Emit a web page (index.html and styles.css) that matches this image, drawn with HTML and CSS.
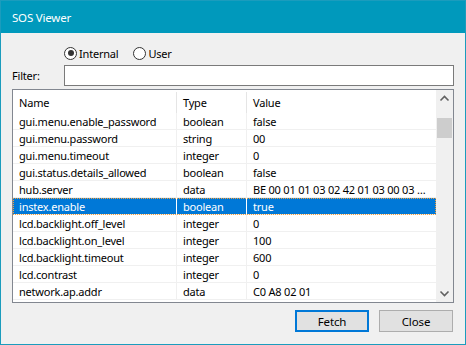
FILE: index.html
```html
<!DOCTYPE html>
<html lang="en">
<head>
    <meta charset="UTF-8">
    <title>SOS Viewer</title>
    <link rel="stylesheet" href="styles.css">
</head>
<body>
    <div class="window">
        <div class="titlebar">SOS Viewer</div>
        <div class="content">
            <div class="radios">
                <label class="radio"><span class="dot checked"></span>Internal</label>
                <label class="radio"><span class="dot"></span>User</label>
            </div>
            <div class="filter">
                <span class="filter-label">Filter:</span>
                <div class="filter-input"></div>
            </div>
            <div class="list">
                <div class="rows">
                    <div class="row head">
                        <div class="cell name">Name</div>
                        <div class="cell type">Type</div>
                        <div class="cell value">Value</div>
                    </div>
                    <div class="row"><div class="cell name">gui.menu.enable_password</div><div class="cell type">boolean</div><div class="cell value">false</div></div>
                    <div class="row"><div class="cell name">gui.menu.password</div><div class="cell type">string</div><div class="cell value">00</div></div>
                    <div class="row"><div class="cell name">gui.menu.timeout</div><div class="cell type">integer</div><div class="cell value">0</div></div>
                    <div class="row"><div class="cell name">gui.status.details_allowed</div><div class="cell type">boolean</div><div class="cell value">false</div></div>
                    <div class="row"><div class="cell name">hub.server</div><div class="cell type">data</div><div class="cell value">BE 00 01 01 03 02 42 01 03 00 03 …</div></div>
                    <div class="row selected"><div class="cell name">instex.enable</div><div class="cell type">boolean</div><div class="cell value">true</div></div>
                    <div class="row"><div class="cell name">lcd.backlight.off_level</div><div class="cell type">integer</div><div class="cell value">0</div></div>
                    <div class="row"><div class="cell name">lcd.backlight.on_level</div><div class="cell type">integer</div><div class="cell value">100</div></div>
                    <div class="row"><div class="cell name">lcd.backlight.timeout</div><div class="cell type">integer</div><div class="cell value">600</div></div>
                    <div class="row"><div class="cell name">lcd.contrast</div><div class="cell type">integer</div><div class="cell value">0</div></div>
                    <div class="row"><div class="cell name">network.ap.addr</div><div class="cell type">data</div><div class="cell value">C0 A8 02 01</div></div>
                </div>
                <div class="scrollbar">
                    <svg class="arrow" width="17" height="17" viewBox="0 0 17 17"><path d="M4.5 10.5 L8.5 6.5 L12.5 10.5" fill="none" stroke="#606060" stroke-width="1.6"/></svg>
                    <div class="track"><div class="thumb"></div></div>
                    <svg class="arrow" width="17" height="17" viewBox="0 0 17 17"><path d="M4.5 6.5 L8.5 10.5 L12.5 6.5" fill="none" stroke="#606060" stroke-width="1.6"/></svg>
                </div>
            </div>
            <div class="buttons">
                <button class="btn default">Fetch</button>
                <button class="btn">Close</button>
            </div>
        </div>
    </div>
</body>
</html>
```
FILE: styles.css
```css
body {
    margin: 0;
    font-family: "Noto Sans", "Liberation Sans", sans-serif;
    font-size: 11px;
    letter-spacing: -0.2px;
    color: #000;
}
.window {
    width: 466px;
    height: 345px;
    box-sizing: border-box;
    border: 1px solid #1b9cbd;
    background: #f0f0f0;
}
.titlebar {
    height: 32px;
    background: #0099bc;
    color: #fff;
    padding-left: 11px;
    display: flex;
    align-items: center;
    font-size: 11.5px;
}
.content {
    padding: 13px 11px 0 11px;
}
.radios {
    display: flex;
    align-items: center;
    height: 14px;
    margin-left: 52px;
}
.radio {
    display: flex;
    align-items: center;
    margin-right: 15px;
}
.dot {
    width: 11px;
    height: 11px;
    border: 1px solid #333;
    border-radius: 50%;
    background: #fff;
    margin-right: 2px;
    position: relative;
}
.dot.checked::after {
    content: "";
    position: absolute;
    left: 2.5px;
    top: 2.5px;
    width: 6px;
    height: 6px;
    border-radius: 50%;
    background: #333;
}
.filter {
    display: flex;
    align-items: center;
    margin-top: 5px;
}
.filter-label {
    width: 52px;
}
.filter-input {
    flex: 1;
    height: 19px;
    border: 1px solid #7a7a7a;
    background: #fff;
}
.list {
    margin-top: 3px;
    height: 212px;
    border: 1px solid #828790;
    background: #fff;
    display: flex;
}
.rows {
    flex: 1;
    overflow: hidden;
}
.row {
    display: flex;
    height: 17px;
    line-height: 15px;
    padding-top: 1px;
    border-bottom: 1px solid #f0f0f0;
    box-sizing: border-box;
}
.row.head {
    height: 23px;
    line-height: 22px;
    padding-top: 2px;
    border-bottom: none;
}
.cell {
    padding-left: 6px;
    box-sizing: border-box;
    white-space: nowrap;
    overflow: hidden;
}
.name {
    width: 163px;
}
.type {
    width: 70px;
    border-left: 1px solid #f0f0f0;
}
.value {
    flex: 1;
    border-left: 1px solid #f0f0f0;
}
.row .type,
.row .value {
    margin-top: -1px;
    padding-top: 1px;
}
.head .type,
.head .value {
    border-left-color: #e5e5e5;
    margin-top: 0;
    padding-top: 0;
}
.row.selected {
    background: #0078d7;
    color: #fff;
    outline: 1px dotted #f0a040;
    outline-offset: -1px;
}
.row.selected .type,
.row.selected .value {
    border-left-color: #fff;
}
.scrollbar {
    width: 17px;
    background: #f0f0f0;
    display: flex;
    flex-direction: column;
}
.arrow {
    display: block;
}
.track {
    flex: 1;
    padding: 11px 1px 0 1px;
}
.thumb {
    height: 20px;
    background: #cdcdcd;
}
.buttons {
    display: flex;
    justify-content: flex-end;
    margin-top: 7px;
    margin-right: 1px;
}
.btn {
    width: 74px;
    height: 22px;
    margin-left: 10px;
    background: #e1e1e1;
    border: 1px solid #adadad;
    font-family: inherit;
    font-size: 11.5px;
    letter-spacing: -0.1px;
    padding: 0;
    color: #000;
}
.btn.default {
    border: 2px solid #0078d7;
}
```
